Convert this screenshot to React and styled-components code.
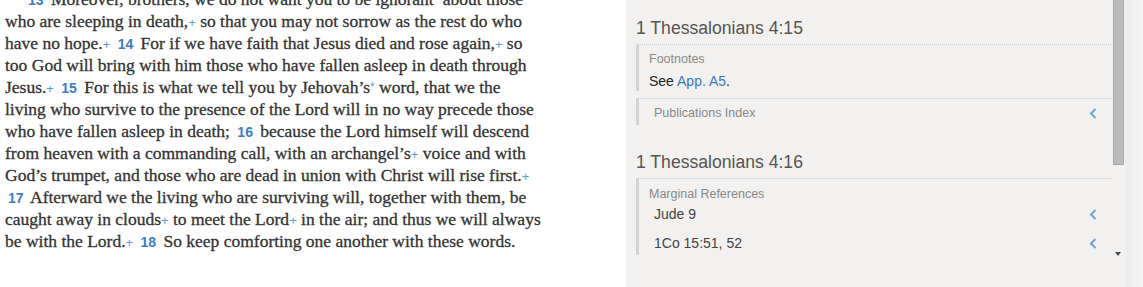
import React from "react";
import styled, { createGlobalStyle } from "styled-components";

const GlobalStyle = createGlobalStyle`
  html, body { margin: 0; padding: 0; background: #fff; overflow: hidden; }
  #root { width: 1143px; height: 287px; }
`;

const Page = styled.div`
  display: flex;
  width: 1143px;
  height: 287px;
  overflow: hidden;
`;

const TextColumn = styled.div`
  flex: none;
  width: 626px;
  box-sizing: border-box;
  padding-left: 5px;
  overflow: hidden;
  background: #fff;
  font-family: "Liberation Serif", serif;
  font-size: 17.5px;
  line-height: 22px;
  color: #333;
  -webkit-text-stroke: 0.3px #333;
`;

const Passage = styled.div`
  margin-top: -12px;
`;

const Line = styled.div`
  white-space: pre;
  height: 22px;
  padding-left: ${(p) => p.$indent || 0}px;
`;

const VerseNum = styled.span`
  font-family: "Liberation Sans", sans-serif;
  font-weight: bold;
  font-size: 14px;
  line-height: 0;
  color: #3b7dc4;
  -webkit-text-stroke: 0;
  padding: 0 3px;
`;

const Plus = styled.span`
  font-family: "Liberation Sans", sans-serif;
  font-size: 13px;
  line-height: 0;
  color: #5f9bd6;
  -webkit-text-stroke: 0;
`;

const Star = styled.span`
  font-family: "Liberation Sans", sans-serif;
  font-size: 12px;
  line-height: 0;
  color: #5f9bd6;
  -webkit-text-stroke: 0;
  vertical-align: 2px;
`;

const RightPanel = styled.div`
  flex: 1;
  display: flex;
  background: #f2f1f0;
`;

const PanelContent = styled.div`
  flex: 1;
  box-sizing: border-box;
  padding: 17px 1px 0 10px;
  font-family: "Liberation Sans", Arial, sans-serif;
`;

const Group = styled.div`
  margin-bottom: 26px;
`;

const Heading = styled.div`
  font-size: 17.6px;
  line-height: 22px;
  color: #555;
  margin-bottom: 5px;
`;

const Section = styled.div`
  border-top: 1px dotted #c8c8c8;
  border-left: 3px solid #d3d3d3;
  margin-bottom: ${(p) => p.$gap || 0}px;
`;

const Label = styled.div`
  font-size: 12.5px;
  line-height: 16px;
  color: #888;
  padding: ${(p) => p.$top}px 0 0 10px;
`;

const Note = styled.div`
  font-size: 14px;
  line-height: 18px;
  color: #222;
  padding: 5px 0 1px 10px;
`;

const Link = styled.span`
  color: #3a78bd;
`;

const RefRow = styled.div`
  display: flex;
  align-items: center;
  justify-content: space-between;
  padding: ${(p) => p.$top}px 14px ${(p) => p.$bottom}px 15px;
  font-size: ${(p) => (p.$muted ? 12.5 : 14)}px;
  line-height: ${(p) => (p.$muted ? 16 : 18)}px;
  color: ${(p) => (p.$muted ? "#888" : "#444")};
`;

const ScrollTrack = styled.div`
  flex: none;
  width: 14px;
  display: flex;
  flex-direction: column;
`;

const Thumb = styled.div`
  margin-left: 1px;
  width: 11px;
  height: 165px;
  box-sizing: border-box;
  background: #bbbbbb;
  border: 1px solid #a8a8a8;
  border-top: none;
`;

const DownArrow = styled.div`
  margin: 87px 0 0 3px;
  width: 0;
  height: 0;
  border-left: 3.5px solid transparent;
  border-right: 3.5px solid transparent;
  border-top: 4px solid #4a4a4a;
`;

const OuterStrip = styled.div`
  flex: none;
  width: 17px;
  background: linear-gradient(to right, #eaeaea, #f2f2f2 40%, #f5f5f5);
`;

const Chevron = () => (
  <svg width="8" height="11" viewBox="0 0 8 11" aria-hidden="true">
    <path d="M6.5 1 L2 5.5 L6.5 10" fill="none" stroke="#6f9fd6" strokeWidth="2" />
  </svg>
);

const P = () => <Plus>+</Plus>;

export default function App() {
  return (
    <>
      <GlobalStyle />
      <Page>
        <TextColumn>
          <Passage>
            <Line $indent={20}>
              <VerseNum>13</VerseNum> Moreover, brothers, we do not want you to be ignorant<Star>*</Star> about those
            </Line>
            <Line>
              who are sleeping in death,<P /> so that you may not sorrow as the rest do who
            </Line>
            <Line>
              have no hope.<P /> <VerseNum>14</VerseNum> For if we have faith that Jesus died and rose again,<P /> so
            </Line>
            <Line>too God will bring with him those who have fallen asleep in death through</Line>
            <Line>
              Jesus.<P /> <VerseNum>15</VerseNum> For this is what we tell you by Jehovah’s<Star>*</Star> word, that we the
            </Line>
            <Line>living who survive to the presence of the Lord will in no way precede those</Line>
            <Line>
              who have fallen asleep in death; <VerseNum>16</VerseNum> because the Lord himself will descend
            </Line>
            <Line>
              from heaven with a commanding call, with an archangel’s<P /> voice and with
            </Line>
            <Line>
              God’s trumpet, and those who are dead in union with Christ will rise first.<P />
            </Line>
            <Line>
              <VerseNum>17</VerseNum> Afterward we the living who are surviving will, together with them, be
            </Line>
            <Line>
              caught away in clouds<P /> to meet the Lord<P /> in the air; and thus we will always
            </Line>
            <Line>
              be with the Lord.<P /> <VerseNum>18</VerseNum> So keep comforting one another with these words.
            </Line>
          </Passage>
        </TextColumn>
        <RightPanel>
          <PanelContent>
            <Group>
              <Heading>1 Thessalonians 4:15</Heading>
              <Section $gap={7}>
                <Label $top={6}>Footnotes</Label>
                <Note>
                  See <Link>App. A5</Link>.
                </Note>
              </Section>
              <Section>
                <RefRow $muted $top={6} $bottom={4}>
                  <span>Publications Index</span>
                  <Chevron />
                </RefRow>
              </Section>
            </Group>
            <Group>
              <Heading>1 Thessalonians 4:16</Heading>
              <Section>
                <Label $top={7}>Marginal References</Label>
                <RefRow $top={3} $bottom={8}>
                  <span>Jude 9</span>
                  <Chevron />
                </RefRow>
                <RefRow $top={3} $bottom={3}>
                  <span>1Co 15:51, 52</span>
                  <Chevron />
                </RefRow>
              </Section>
            </Group>
          </PanelContent>
          <ScrollTrack>
            <Thumb />
            <DownArrow />
          </ScrollTrack>
          <OuterStrip />
        </RightPanel>
      </Page>
    </>
  );
}
